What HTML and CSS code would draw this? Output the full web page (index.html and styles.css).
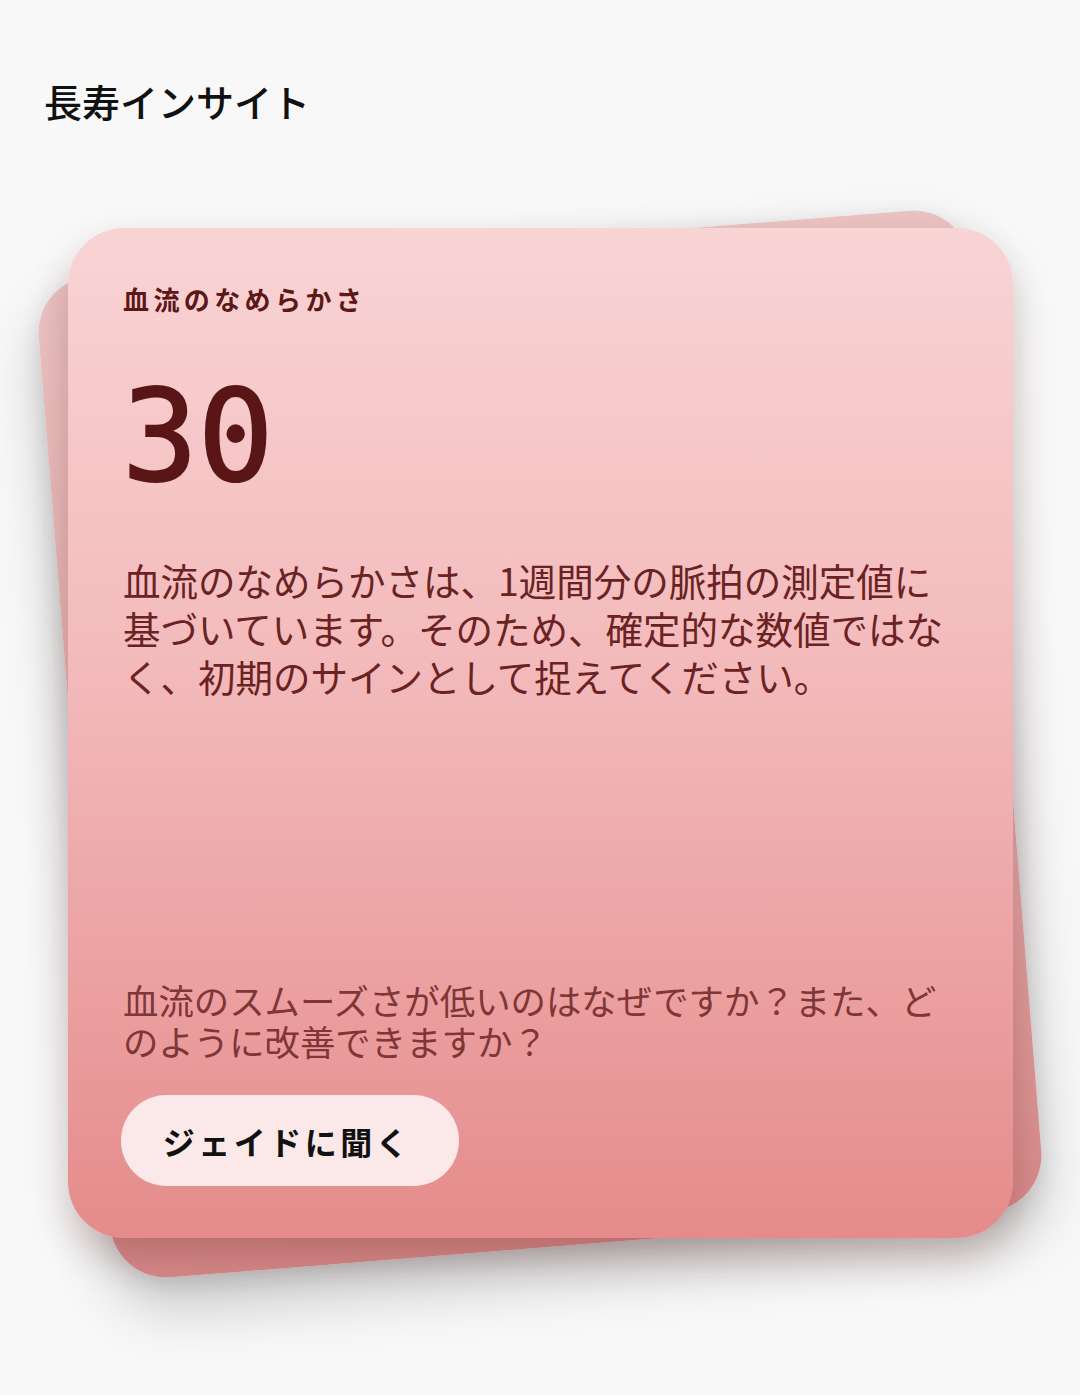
FILE: index.html
```html
<!DOCTYPE html>
<html lang="ja">
<head>
<meta charset="utf-8">
<title>長寿インサイト</title>
<link rel="stylesheet" href="styles.css">
</head>
<body>
  <header class="page-header">
    <h1 class="page-title">長寿インサイト</h1>
  </header>
  <main class="stack">
    <div class="card-back"></div>
    <section class="card">
      <div class="card-label">血流のなめらかさ</div>
      <div class="card-value">30</div>
      <p class="card-desc">血流のなめらかさは、1週間分の脈拍の測定値に基づいています。そのため、確定的な数値ではなく、初期のサインとして捉えてください。</p>
      <div class="card-footer">
        <p class="card-question">血流のスムーズさが低いのはなぜですか？また、どのように改善できますか？</p>
        <button class="ask-btn">ジェイドに聞く</button>
      </div>
    </section>
  </main>
</body>
</html>
```

FILE: styles.css
```css
html, body {
  margin: 0;
  padding: 0;
}
body {
  background: #f8f8f8;
  width: 1080px;
  height: 1395px;
  overflow: hidden;
  font-family: "Noto Sans CJK JP", "Noto Sans", sans-serif;
}
.page-header {
  padding: 74px 0 0 44px;
}
.page-title {
  margin: 0;
  font-size: 38px;
  line-height: 54px;
  font-weight: 500;
  color: #111;
}
.stack {
  position: relative;
  margin: 100px 67px 0 68px;
  height: 1010px;
}
.card-back {
  position: absolute;
  left: 5px;
  top: 14px;
  width: 934px;
  height: 1004px;
  border-radius: 56px;
  background: linear-gradient(180deg, #ecc3c3 0%, #e4abab 55%, #d88a8a 100%);
  transform: rotate(-4.6deg);
  box-shadow: 0 30px 60px rgba(0, 0, 0, 0.2), 0 8px 24px rgba(0, 0, 0, 0.08);
}
.card {
  position: relative;
  box-sizing: border-box;
  height: 1010px;
  border-radius: 56px;
  background: linear-gradient(180deg, #f9d4d5 0%, #f3b9ba 45%, #e58b8b 100%);
  box-shadow: 0 20px 40px rgba(70, 0, 0, 0.22);
  padding: 54px 60px 52px 55px;
  display: flex;
  flex-direction: column;
  color: #5c1717;
}
.card-label {
  font-size: 26px;
  line-height: 34px;
  font-weight: 700;
  letter-spacing: 4.4px;
}
.card-value {
  margin-top: 58px;
  font-family: "DejaVu Sans Mono", monospace;
  font-size: 126px;
  line-height: 126px;
  font-weight: 400;
  -webkit-text-stroke: 2px #5a1616;
  color: #5a1616;
  margin-left: -1px;
}
.card-desc {
  margin: 56px 0 0;
  font-size: 37.5px;
  line-height: 48px;
  color: #6a2222;
}
.card-footer {
  margin-top: auto;
}
.card-question {
  margin: 0;
  font-size: 35.4px;
  line-height: 41px;
  color: #7e3636;
}
.ask-btn {
  margin-top: 34px;
  display: block;
  width: 338px;
  height: 91px;
  margin-left: -2px;
  border: none;
  border-radius: 46px;
  background: #fbe9e9;
  color: #111;
  font-family: "Noto Sans CJK JP", sans-serif;
  font-size: 32px;
  font-weight: 700;
  letter-spacing: 3.5px;
  padding: 0 6px 0 0;
}
```
